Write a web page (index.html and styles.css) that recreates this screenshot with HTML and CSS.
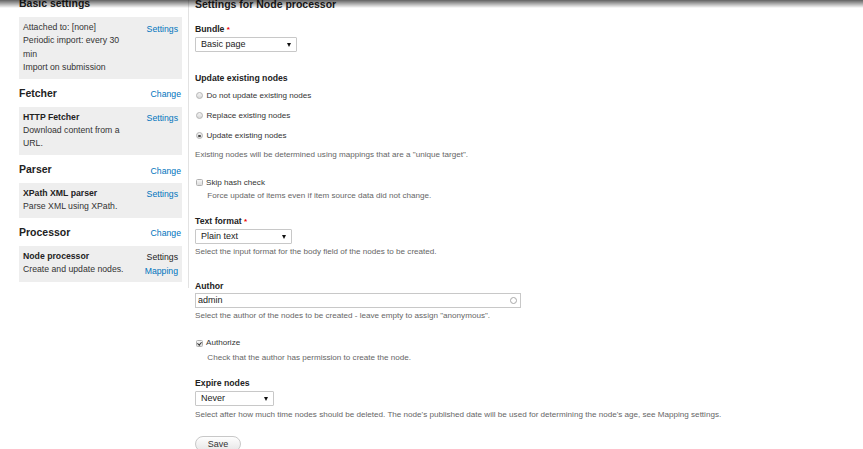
FILE: index.html
```html
<!DOCTYPE html>
<html lang="en">
<head>
    <meta charset="UTF-8">
    <title>Feeds importer - Node processor settings</title>
    <link rel="stylesheet" href="styles.css">
</head>
<body>
    <!-- toolbar shadow, page is scrolled under it -->
    <div class="top-shadow"></div>

    <div class="page">
        <!-- Importer overview -->
        <div class="sidebar">
            <div class="section-head">
                <h2>Basic settings</h2>
            </div>
            <div class="box">
                <div class="info">
                    Attached to: [none]<br>
                    Periodic import: every 30 min<br>
                    Import on submission
                </div>
                <div class="links"><a href="#">Settings</a></div>
            </div>

            <div class="section-head">
                <h2>Fetcher</h2>
                <a href="#" class="change">Change</a>
            </div>
            <div class="box">
                <div class="info">
                    <strong>HTTP Fetcher</strong><br>
                    Download content from a URL.
                </div>
                <div class="links"><a href="#">Settings</a></div>
            </div>

            <div class="section-head">
                <h2>Parser</h2>
                <a href="#" class="change">Change</a>
            </div>
            <div class="box">
                <div class="info">
                    <strong>XPath XML parser</strong><br>
                    Parse XML using XPath.
                </div>
                <div class="links"><a href="#">Settings</a></div>
            </div>

            <div class="section-head">
                <h2>Processor</h2>
                <a href="#" class="change">Change</a>
            </div>
            <div class="box">
                <div class="info">
                    <strong>Node processor</strong><br>
                    Create and update nodes.
                </div>
                <div class="links">
                    <a href="#" class="current">Settings</a>
                    <a href="#">Mapping</a>
                </div>
            </div>
        </div>

        <!-- Settings form -->
        <div class="main">
            <h1>Settings for Node processor</h1>

            <label class="field-label label-bundle">Bundle <span class="req">*</span></label>
            <div class="select select-bundle">Basic page</div>

            <label class="field-label label-update">Update existing nodes</label>
            <div class="radio radio-first"><span class="radio-dot"></span>Do not update existing nodes</div>
            <div class="radio"><span class="radio-dot"></span>Replace existing nodes</div>
            <div class="radio"><span class="radio-dot checked"></span>Update existing nodes</div>
            <div class="description desc-update">Existing nodes will be determined using mappings that are a "unique target".</div>

            <div class="checkbox check-skip"><span class="check-box"></span>Skip hash check</div>
            <div class="description indent desc-skip">Force update of items even if item source data did not change.</div>

            <label class="field-label label-format">Text format <span class="req">*</span></label>
            <div class="select select-format">Plain text</div>
            <div class="description desc-format">Select the input format for the body field of the nodes to be created.</div>

            <label class="field-label label-author">Author</label>
            <div class="text-input">admin<span class="throbber"></span></div>
            <div class="description desc-author">Select the author of the nodes to be created - leave empty to assign "anonymous".</div>

            <div class="checkbox check-auth"><span class="check-box checked"></span>Authorize</div>
            <div class="description indent desc-auth">Check that the author has permission to create the node.</div>

            <label class="field-label label-expire">Expire nodes</label>
            <div class="select select-expire">Never</div>
            <div class="description desc-expire">Select after how much time nodes should be deleted. The node's published date will be used for determining the node's age, see Mapping settings.</div>

            <button class="save">Save</button>
        </div>
    </div>
</body>
</html>
```

FILE: styles.css
```css
body {
    margin: 0;
    padding: 0;
    background: #fff;
    color: #333;
    font-family: "Liberation Sans", Arial, sans-serif;
    font-size: 8.7px;
    line-height: 13.4px;
    overflow: hidden;
}

a {
    color: #0074bd;
    text-decoration: none;
}

.top-shadow {
    position: fixed;
    top: 0;
    left: 0;
    right: 0;
    height: 8px;
    background: linear-gradient(rgba(0, 0, 0, 0.62), rgba(0, 0, 0, 0));
    z-index: 5;
}

.page {
    display: flex;
    align-items: flex-start;
    margin-top: -11px;
}

/* Sidebar */
.sidebar {
    width: 163px;
    padding: 0 6px 6px 19px;
    border-right: 1px solid #e2e2e2;
}

.section-head {
    display: flex;
    justify-content: space-between;
    align-items: center;
    height: 28px;
}

.section-head h2 {
    margin: 0;
    font-size: 10.5px;
    line-height: 14px;
    color: #222;
}

.section-head .change {
    margin-top: 5px;
    margin-right: 1px;
}

.box {
    display: flex;
    background: #eeeeee;
    padding: 4px;
}

.box .info {
    flex: 1;
}

.box strong {
    color: #222;
}

.box .links {
    display: flex;
    flex-direction: column;
    align-items: flex-end;
    margin-left: 10px;
    padding-top: 1.5px;
    width: 34px;
}

.box .links a.current {
    color: #222;
}

/* Main form */
.main {
    flex: 1;
    padding-left: 6px;
}

.main h1 {
    margin: 7.8px 0 0 0;
    font-size: 10.5px;
    line-height: 14px;
    color: #222;
}

.field-label {
    display: block;
    font-weight: bold;
    color: #222;
}

.req {
    color: #e00;
    font-size: 8px;
}

.label-bundle { margin-top: 12.6px; }
.label-update { margin-top: 19.6px; }
.label-format { margin-top: 12.9px; }
.label-author { margin-top: 22px; }
.label-expire { margin-top: 13.1px; }

.select {
    position: relative;
    box-sizing: border-box;
    height: 15.6px;
    line-height: 13.6px;
    padding-left: 5px;
    border: 1px solid #c8c8c8;
    border-radius: 1px;
    font-size: 9px;
    color: #222;
    background: #fff;
}

.select::after {
    content: "";
    position: absolute;
    right: 5px;
    top: 5px;
    border-left: 2.5px solid transparent;
    border-right: 2.5px solid transparent;
    border-top: 4px solid #111;
}

.select-bundle { width: 102px; }
.select-format { width: 97px; }
.select-expire { width: 79px; }

.radio,
.checkbox {
    display: flex;
    align-items: center;
    font-size: 8.1px;
    color: #333;
}

.radio {
    height: 20px;
}

.radio-first {
    margin-top: 0.6px;
}

.radio-dot {
    position: relative;
    box-sizing: border-box;
    width: 7px;
    height: 7px;
    margin: 0 3.5px 0 1px;
    border: 1px solid #b4b4b4;
    border-radius: 50%;
    background: linear-gradient(#f4f4f4, #d8d8d8);
}

.radio-dot.checked::after {
    content: "";
    position: absolute;
    left: 1.25px;
    top: 1.25px;
    width: 2.5px;
    height: 2.5px;
    border-radius: 50%;
    background: #444;
}

.checkbox {
    height: 13.4px;
}

.check-box {
    position: relative;
    box-sizing: border-box;
    width: 7px;
    height: 7px;
    margin: 0 3.5px 0 0.5px;
    border: 1px solid #b0b0b0;
    border-radius: 1.5px;
    background: linear-gradient(#f6f6f6, #dcdcdc);
}

.check-box.checked::after {
    content: "";
    position: absolute;
    left: 1.5px;
    top: 0px;
    width: 1.5px;
    height: 3.2px;
    border-right: 1.3px solid #333;
    border-bottom: 1.3px solid #333;
    transform: rotate(40deg);
}

.check-skip { margin-top: 15px; }
.check-auth { margin-top: 14.6px; }

.description {
    font-size: 8.1px;
    line-height: 12px;
    color: #666;
}

.indent {
    padding-left: 12.3px;
}

.desc-update { margin-top: 2.7px; }
.desc-skip { margin-top: 1.3px; }
.desc-format { margin-top: 1.5px; }
.desc-author { margin-top: 2px; }
.desc-auth { margin-top: 2.5px; }
.desc-expire { margin-top: 2.3px; }

.text-input {
    position: relative;
    box-sizing: border-box;
    width: 326px;
    height: 14.6px;
    line-height: 12.6px;
    padding-left: 2px;
    border: 1px solid #c8c8c8;
    font-size: 9px;
    color: #222;
}

.throbber {
    position: absolute;
    right: 3.5px;
    top: 3px;
    box-sizing: border-box;
    width: 7px;
    height: 7px;
    border: 1px solid #a8a8a8;
    border-radius: 50%;
}

.save {
    display: block;
    margin-top: 15.7px;
    width: 46px;
    height: 16px;
    padding: 0;
    border: 1px solid #c8c8c8;
    border-radius: 10px;
    background: linear-gradient(#fefefe, #e6e6e6);
    font-family: "Liberation Sans", Arial, sans-serif;
    font-size: 9px;
    color: #333;
}
```
